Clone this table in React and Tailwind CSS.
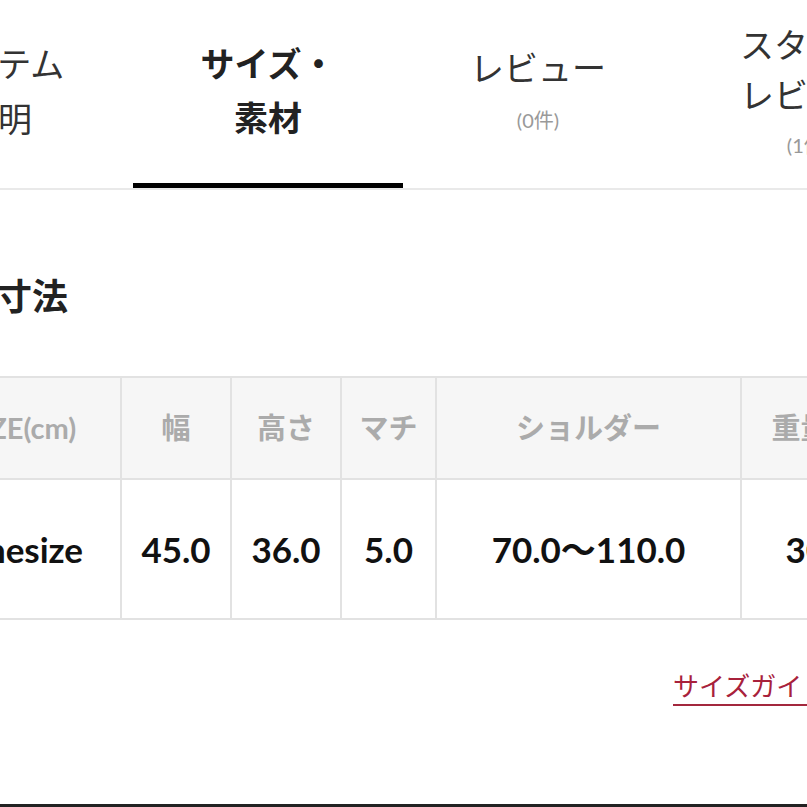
import React from "react";

const FONT = "font-['Lato','Noto_Sans_CJK_JP',sans-serif]";

function Tab({ lines, sub, active, pad, lead }) {
  return (
    <div
      className={`w-[270px] shrink-0 h-[188px] ${pad} flex flex-col items-center justify-center border-b-[5px] ${
        active ? "border-black" : "border-transparent"
      }`}
    >
      {lines.map((l, i) => (
        <div
          key={i}
          className={`text-[34px] ${lead} whitespace-nowrap ${
            active ? "font-bold text-[#222]" : "font-normal text-[#333]"
          }`}
        >
          {l}
        </div>
      ))}
      {sub && (
        <div className="mt-[11px] text-[20px] leading-[28px] text-[#999] whitespace-nowrap">
          {sub}
        </div>
      )}
    </div>
  );
}

export default function App() {
  const heads = ["SIZE(cm)", "幅", "高さ", "マチ", "ショルダー", "重量(g)"];
  const vals = ["Onesize", "45.0", "36.0", "5.0", "70.0〜110.0", "300"];
  const widths = ["w-[201px]", "w-[110px]", "w-[110px]", "w-[95px]", "w-[305px]", "w-[150px]"];
  return (
    <div className={`w-[807px] h-[807px] overflow-hidden bg-white flex flex-col ${FONT}`}>
      <div className="flex ml-[-137px] border-b-2 border-[#e9e9e9] w-[1080px]">
        <Tab lines={["アイテム", "説明"]} pad="pb-[1px]" lead="leading-[55px]" />
        <Tab lines={["サイズ・", "素材"]} active pad="pb-[1px]" lead="leading-[54px]" />
        <Tab lines={["レビュー"]} sub="(0件)" pad="pb-[8px]" lead="leading-[54px]" />
        <Tab lines={["スタッフ", "レビュー"]} sub="(1件)" pad="pb-[4px]" lead="leading-[50px]" />
      </div>

      <div className="mt-[82px] ml-[-4px] text-[36px] leading-[48px] font-bold text-[#222] whitespace-nowrap">
        寸法
      </div>

      <table className="mt-[56px] ml-[-81px] table-fixed border-collapse w-[971px] shrink-0">
        <colgroup>
          {widths.map((w, i) => (
            <col key={i} className={w} />
          ))}
        </colgroup>
        <thead>
          <tr className="h-[102px] bg-[#f6f6f6]">
            {heads.map((h, i) => (
              <th
                key={i}
                className="border-2 border-[#e2e2e2] text-[29px] font-bold text-[#ababab] text-center whitespace-nowrap"
              >
                {h}
              </th>
            ))}
          </tr>
        </thead>
        <tbody>
          <tr className="h-[140px] bg-white">
            {vals.map((v, i) => (
              <td
                key={i}
                className="border-2 border-[#e2e2e2] text-[35px] font-bold text-[#111] text-center whitespace-nowrap"
              >
                {v}
              </td>
            ))}
          </tr>
        </tbody>
      </table>

      <div className="mt-[48px] flex">
        <span className="ml-[673px] whitespace-nowrap text-[26px] leading-[36px] text-[#a8213b] border-b-2 border-[#a3283d]">
          サイズガイド
        </span>
      </div>

      <div className="flex-1" />
      <div className="h-[3px] bg-[#222] shrink-0" />
    </div>
  );
}
